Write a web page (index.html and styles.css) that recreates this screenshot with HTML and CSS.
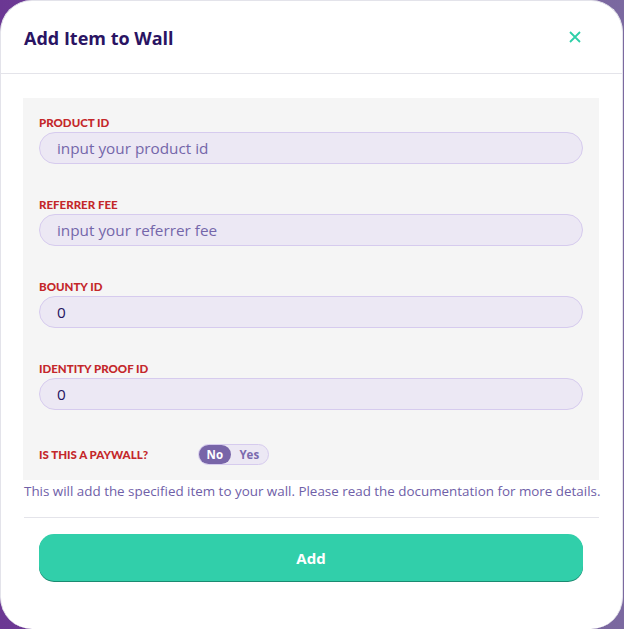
FILE: index.html
```html
<!DOCTYPE html>
<html lang="en">
<head>
    <meta charset="UTF-8">
    <meta name="viewport" content="width=device-width, initial-scale=1.0">
    <title>Add Item to Wall</title>
    <link rel="stylesheet" href="styles.css">
</head>
<body>

<!-- Modal -->
<div class="modal">
    <div class="modal-header">
        <h2>Add Item to Wall</h2>
        <button class="close-btn" aria-label="Close">
            <svg width="12" height="12" viewBox="0 0 12 12">
                <path d="M1 1 L11 11 M11 1 L1 11" stroke="#2ecfa8" stroke-width="1.8" fill="none"/>
            </svg>
        </button>
    </div>

    <div class="modal-body">
        <div class="form-panel">
            <div class="field">
                <label for="productId">Product ID</label>
                <input type="text" id="productId" placeholder="input your product id">
            </div>
            <div class="field">
                <label for="referrerFee">Referrer Fee</label>
                <input type="text" id="referrerFee" placeholder="input your referrer fee">
            </div>
            <div class="field">
                <label for="bountyId">Bounty ID</label>
                <input type="text" id="bountyId" value="0">
            </div>
            <div class="field">
                <label for="proofId">Identity Proof ID</label>
                <input type="text" id="proofId" value="0">
            </div>
            <div class="paywall-row">
                <span class="paywall-label">Is this a paywall?</span>
                <div class="toggle">
                    <span class="toggle-opt active">No</span>
                    <span class="toggle-opt">Yes</span>
                </div>
            </div>
        </div>
        <p class="help-text">This will add the specified item to your wall. Please read the documentation for more details.</p>
        <div class="divider"></div>
        <button class="add-btn">Add</button>
    </div>
</div>

</body>
</html>
```

FILE: styles.css
```css
body {
    margin: 0;
    padding: 0;
    height: 629px;
    overflow: hidden;
    background: linear-gradient(90deg, #6b3793, #7b69a0);
    font-family: 'Open Sans', sans-serif;
}

/* Ventana modal */
.modal {
    background: #fff;
    width: 623px;
    height: 629px;
    border: 1px solid #e3e3ea;
    border-bottom: none;
    border-radius: 32px;
    box-sizing: border-box;
}

.modal-header {
    height: 72px;
    display: flex;
    align-items: center;
    justify-content: space-between;
    padding: 0 23px;
    border-bottom: 1px solid #e4e4ea;
}

.modal-header h2 {
    margin: 0;
    font-size: 18px;
    font-weight: 700;
    color: #2a1463;
    padding-top: 1px;
}

.close-btn {
    background: none;
    border: none;
    padding: 0;
    margin-right: 18px;
    display: flex;
    cursor: pointer;
}

.modal-body {
    padding: 24px 23px 0 22px;
}

.form-panel {
    background: #f5f5f5;
    padding: 18px 16px 15px 16px;
}

.field {
    margin-bottom: 34px;
}

label,
.paywall-label {
    display: block;
    font-family: 'Lato', sans-serif;
    font-size: 11.5px;
    font-weight: 900;
    color: #c4272a;
    text-transform: uppercase;
    line-height: 14px;
    margin-bottom: 2px;
}

input[type="text"] {
    display: block;
    width: 100%;
    box-sizing: border-box;
    height: 32px;
    border-radius: 16px;
    border: 1px solid #d6cbee;
    background: #ece8f4;
    padding: 0 17px;
    font-family: 'Open Sans', sans-serif;
    font-size: 15.3px;
    color: #24125e;
    outline: none;
}

input::placeholder {
    color: #7466aa;
}

.paywall-row {
    display: flex;
    align-items: center;
}

.paywall-label {
    width: 159px;
    margin: 0;
}

.toggle {
    display: flex;
    background: #ece8f4;
    border: 1px solid #d6cbee;
    border-radius: 11px;
    height: 21px;
    width: 71px;
    box-sizing: border-box;
}

.toggle-opt {
    font-size: 11.5px;
    font-weight: 700;
    color: #7a6aae;
    line-height: 19px;
    border-radius: 10px;
    text-align: center;
    width: 38px;
}

.toggle-opt.active {
    background: #7865a8;
    color: #fff;
    width: 32px;
}

.help-text {
    margin: 2px 0 0 1px;
    font-size: 13.4px;
    line-height: 18px;
    color: #6f60a8;
    white-space: nowrap;
}

.divider {
    height: 1px;
    background: #e4e4ea;
    margin: 17px 0 16px 1px;
}

.add-btn {
    display: block;
    margin: 0 16px 0 16px;
    width: calc(100% - 32px);
    height: 47px;
    background: #31cfaa;
    border: none;
    border-radius: 15px;
    box-shadow: 0 1px 0 #1b8a71;
    color: #fff;
    font-family: 'Open Sans', sans-serif;
    font-size: 15px;
    font-weight: 700;
    cursor: pointer;
}
```
